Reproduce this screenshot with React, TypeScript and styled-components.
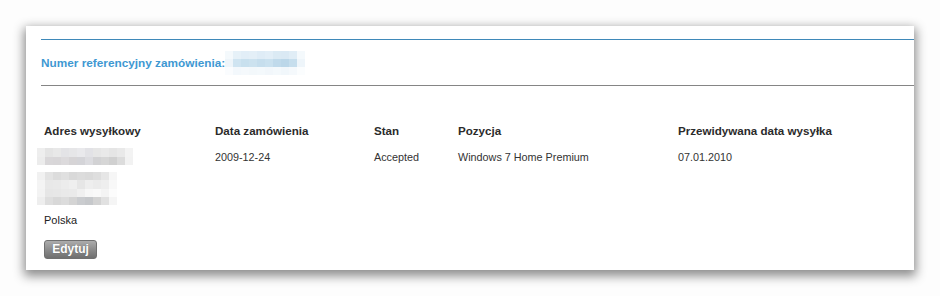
import React from "react";
import styled, { createGlobalStyle } from "styled-components";

const Global = createGlobalStyle`
  html, body { margin: 0; padding: 0; background: #ffffff; }
  body { font-family: "Liberation Sans", Arial, sans-serif; }
`;

const Page = styled.div`
  width: 940px;
  height: 296px;
  padding: 26px 0 0 26px;
  box-sizing: border-box;
  background: #fdfdfd;
`;

const Panel = styled.div`
  width: 888px;
  height: 244px;
  box-sizing: border-box;
  padding: 13px 0 0 15px;
  background: #ffffff;
  box-shadow: 0 4px 10px 2px rgba(0, 0, 0, 0.45);
`;

const Rule = styled.div<{ $color: string }>`
  height: 0;
  border-top: 1px solid ${(p) => p.$color};
`;

const TitleRow = styled.div`
  height: 45px;
  display: flex;
  align-items: center;
`;

const Title = styled.h2`
  margin: 0;
  font-size: 11.8px;
  line-height: 14px;
  font-weight: bold;
  color: #3e98d2;
`;

const Table = styled.div`
  margin-top: 38px;
  padding-left: 3px;
  display: grid;
  grid-template-columns: 171px 159px 84px 220px 1fr;
  grid-template-rows: 14px auto;
  row-gap: 10px;
`;

const Head = styled.div`
  font-size: 11.6px;
  line-height: 14px;
  font-weight: bold;
  color: #2b2b2b;
`;

const Cell = styled.div`
  font-size: 10.8px;
  line-height: 18px;
  color: #333333;
`;

const AddressCell = styled.div`
  display: flex;
  flex-direction: column;
  align-items: flex-start;
`;

const Spacer = styled.div`
  height: 7px;
`;

const Country = styled.div`
  margin-top: 8px;
  font-size: 11px;
  line-height: 14px;
  color: #222222;
`;

const Button = styled.button`
  margin-top: 13px;
  width: 53px;
  height: 19px;
  padding: 0;
  border: 1px solid #707070;
  border-radius: 3px;
  background: linear-gradient(#acacac, #8c8c8c 50%, #6f6f6f);
  color: #ffffff;
  font-family: "Liberation Sans", Arial, sans-serif;
  font-size: 12px;
  font-weight: bold;
  line-height: 17px;
  text-shadow: 0 0 1px rgba(0, 0, 0, 0.3);
  cursor: pointer;
`;

const MosaicSvg = styled.svg<{ $shift: number }>`
  display: block;
  margin-left: ${(p) => p.$shift}px;
`;

type MosaicProps = { rows: string[][]; cw: number; ch: number; shift?: number };

function Mosaic({ rows, cw, ch, shift = 0 }: MosaicProps) {
  const w = rows[0].length * cw;
  const h = rows.length * ch;
  return (
    <MosaicSvg $shift={shift} width={w} height={h} viewBox={`0 0 ${w} ${h}`} shapeRendering="crispEdges">
      {rows.map((r, y) =>
        r.map((c, x) => <rect key={`${x}-${y}`} x={x * cw} y={y * ch} width={cw} height={ch} fill={c} />)
      )}
    </MosaicSvg>
  );
}

const refMosaic = [
  ["#f4f9fc", "#e6f1f8", "#e2eef7", "#e4eff7", "#dfecf6", "#e2eef7", "#dbeaf4", "#dae9f4", "#e0edf6", "#f4f9fc"],
  ["#eef5fa", "#cfe4f1", "#c8e0ee", "#cce2ef", "#c6deed", "#cae1ef", "#c0daeb", "#bbd7e9", "#c6deed", "#eef5fa"],
  ["#fafcfe", "#f3f8fc", "#f5f9fc", "#f3f8fb", "#f4f9fc", "#f2f7fb", "#f4f9fc", "#f1f7fb", "#f5f9fc", "#fbfdfe"],
];

const addr1 = [
  ["#eeeeee", "#e4e4e4", "#e8e8e8", "#e3e3e6", "#e6e6e8", "#e9e9ec", "#e2e2e6", "#e6e6e6", "#e9e9e9", "#e5e5e5", "#e9e9e9", "#f3f3f3"],
  ["#ececec", "#d9d7d9", "#d8d6d8", "#dcdadc", "#d6d4d6", "#d4d4d8", "#dcdce0", "#d2d2d4", "#d6d6d6", "#d0d0d0", "#dcdcdc", "#f2f2f2"],
];

const addr2 = [
  ["#f1f1f1", "#e3e3e3", "#dcdcdc", "#e0e0e0", "#d9d9d9", "#dcdcdc", "#dadada", "#dedede", "#e6e6e6", "#f6f6f6"],
  ["#f4f4f4", "#e8e8e8", "#e9e9e9", "#ececec", "#efefef", "#e6e6e6", "#eeeeee", "#ebebeb", "#eeeeee", "#f8f8f8"],
  ["#f3f3f3", "#e6e6e6", "#e7e7e7", "#e9e9e9", "#eaeaea", "#f0f0f0", "#f7f7f7", "#f9f9f9", "#f4f4f4", "#fcfcfc"],
  ["#eeeeee", "#dedede", "#d8d8d8", "#dcdcdc", "#d4d4d4", "#cacccf", "#c6c8cb", "#d3d3d3", "#e1e1e1", "#f5f5f5"],
];

export default function App() {
  return (
    <Page>
      <Global />
      <Panel>
        <Rule $color="#3f89b9" />
        <TitleRow>
          <Title>Numer referencyjny zamówienia:</Title>
          <Mosaic rows={refMosaic} cw={8} ch={8} />
        </TitleRow>
        <Rule $color="#858585" />
        <Table>
          <Head>Adres wysyłkowy</Head>
          <Head>Data zamówienia</Head>
          <Head>Stan</Head>
          <Head>Pozycja</Head>
          <Head>Przewidywana data wysyłka</Head>
          <AddressCell>
            <Mosaic rows={addr1} cw={8} ch={8.5} shift={-7} />
            <Spacer />
            <Mosaic rows={addr2} cw={8} ch={8.25} shift={-7} />
            <Country>Polska</Country>
            <Button>Edytuj</Button>
          </AddressCell>
          <Cell>2009-12-24</Cell>
          <Cell>Accepted</Cell>
          <Cell>Windows 7 Home Premium</Cell>
          <Cell>07.01.2010</Cell>
        </Table>
      </Panel>
    </Page>
  );
}
